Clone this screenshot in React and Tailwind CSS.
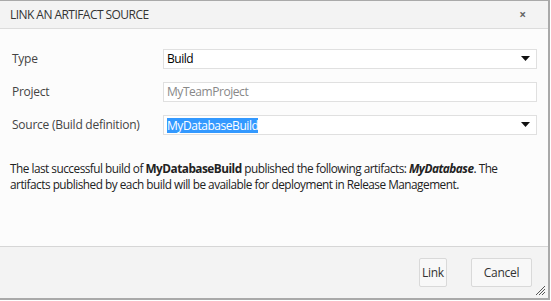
export default function App() {
  const font = { fontFamily: '"Open Sans", "Noto Sans", sans-serif' };
  return (
    <div className="w-[551px] h-[301px] bg-white" style={font}>
      <div className="w-[550px] h-[300px] border-t border-r-2 border-b-2 border-[#a9a9a9] flex flex-col bg-[#fcfcfc] text-[#333]">
        <div className="h-[28px] bg-[#f3f3f3] border-b border-[#dcdcdc] flex items-center justify-between pl-[10px] pr-[22px]">
          <span className="text-[12px] tracking-[-0.55px]">LINK AN ARTIFACT SOURCE</span>
          <span className="text-[12px] text-[#666] font-bold">×</span>
        </div>
        <div className="flex-1 flex flex-col px-[10px] pt-[20px]">
          <div className="flex flex-col gap-[13px]">
            <Row label="Type">
              <div className="flex-1 h-[20px] border border-[#e0e0e0] bg-white flex items-center justify-between pl-[3px] pr-[6px]">
                <span className="text-[12px] tracking-[-0.45px] text-black">Build</span>
                <Arrow />
              </div>
            </Row>
            <Row label="Project">
              <div className="flex-1 h-[20px] border border-[#e0e0e0] bg-white flex items-center pl-[3px]">
                <span className="text-[12px] tracking-[-0.45px] text-[#888]">MyTeamProject</span>
              </div>
            </Row>
            <Row label="Source (Build definition)">
              <div className="flex-1 h-[20px] border border-[#e0e0e0] bg-white flex items-center justify-between pl-[3px] pr-[6px]">
                <span className="text-[12px] tracking-[-0.45px] text-white bg-[#3399ff] leading-[15px]">MyDatabaseBuild</span>
                <Arrow />
              </div>
            </Row>
          </div>
          <p className="mt-[25px] text-[11.8px] leading-[16px] tracking-[-0.5px] text-[#222]">
            The last successful build of <b>MyDatabaseBuild</b> published the following artifacts: <b><i>MyDatabase</i></b>. The artifacts published by each build will be available for deployment in Release Management.
          </p>
        </div>
        <div className="h-[52px] bg-[#f3f3f3] border-t border-[#d6d6d6] flex items-center justify-end gap-[24px] pr-[16px] relative">
          <button className="h-[29px] w-[28px] border border-[#d9d9d9] rounded-[2px] bg-[#f8f8f8] text-[12px] tracking-[-0.3px] text-[#333]">Link</button>
          <button className="h-[29px] w-[61px] border border-[#d9d9d9] rounded-[2px] bg-[#f8f8f8] text-[12px] tracking-[-0.3px] text-[#333]">Cancel</button>
          <svg className="absolute right-[2px] bottom-[2px]" width="11" height="11" viewBox="0 0 11 11">
            <path d="M10 1 L1 10 M10 4 L4 10 M10 7 L7 10" stroke="#555" strokeWidth="1" />
          </svg>
        </div>
      </div>
    </div>
  );
}

function Row({ label, children }) {
  return (
    <div className="flex items-center">
      <div className="w-[153px] pl-[2px] text-[12px] tracking-[-0.25px] text-[#444]">{label}</div>
      <div className="flex-1 flex pr-[1px]">{children}</div>
    </div>
  );
}

function Arrow() {
  return (
    <svg width="9" height="6" viewBox="0 0 9 6">
      <path d="M0 0 H9 L4.5 5 Z" fill="#111" />
    </svg>
  );
}
